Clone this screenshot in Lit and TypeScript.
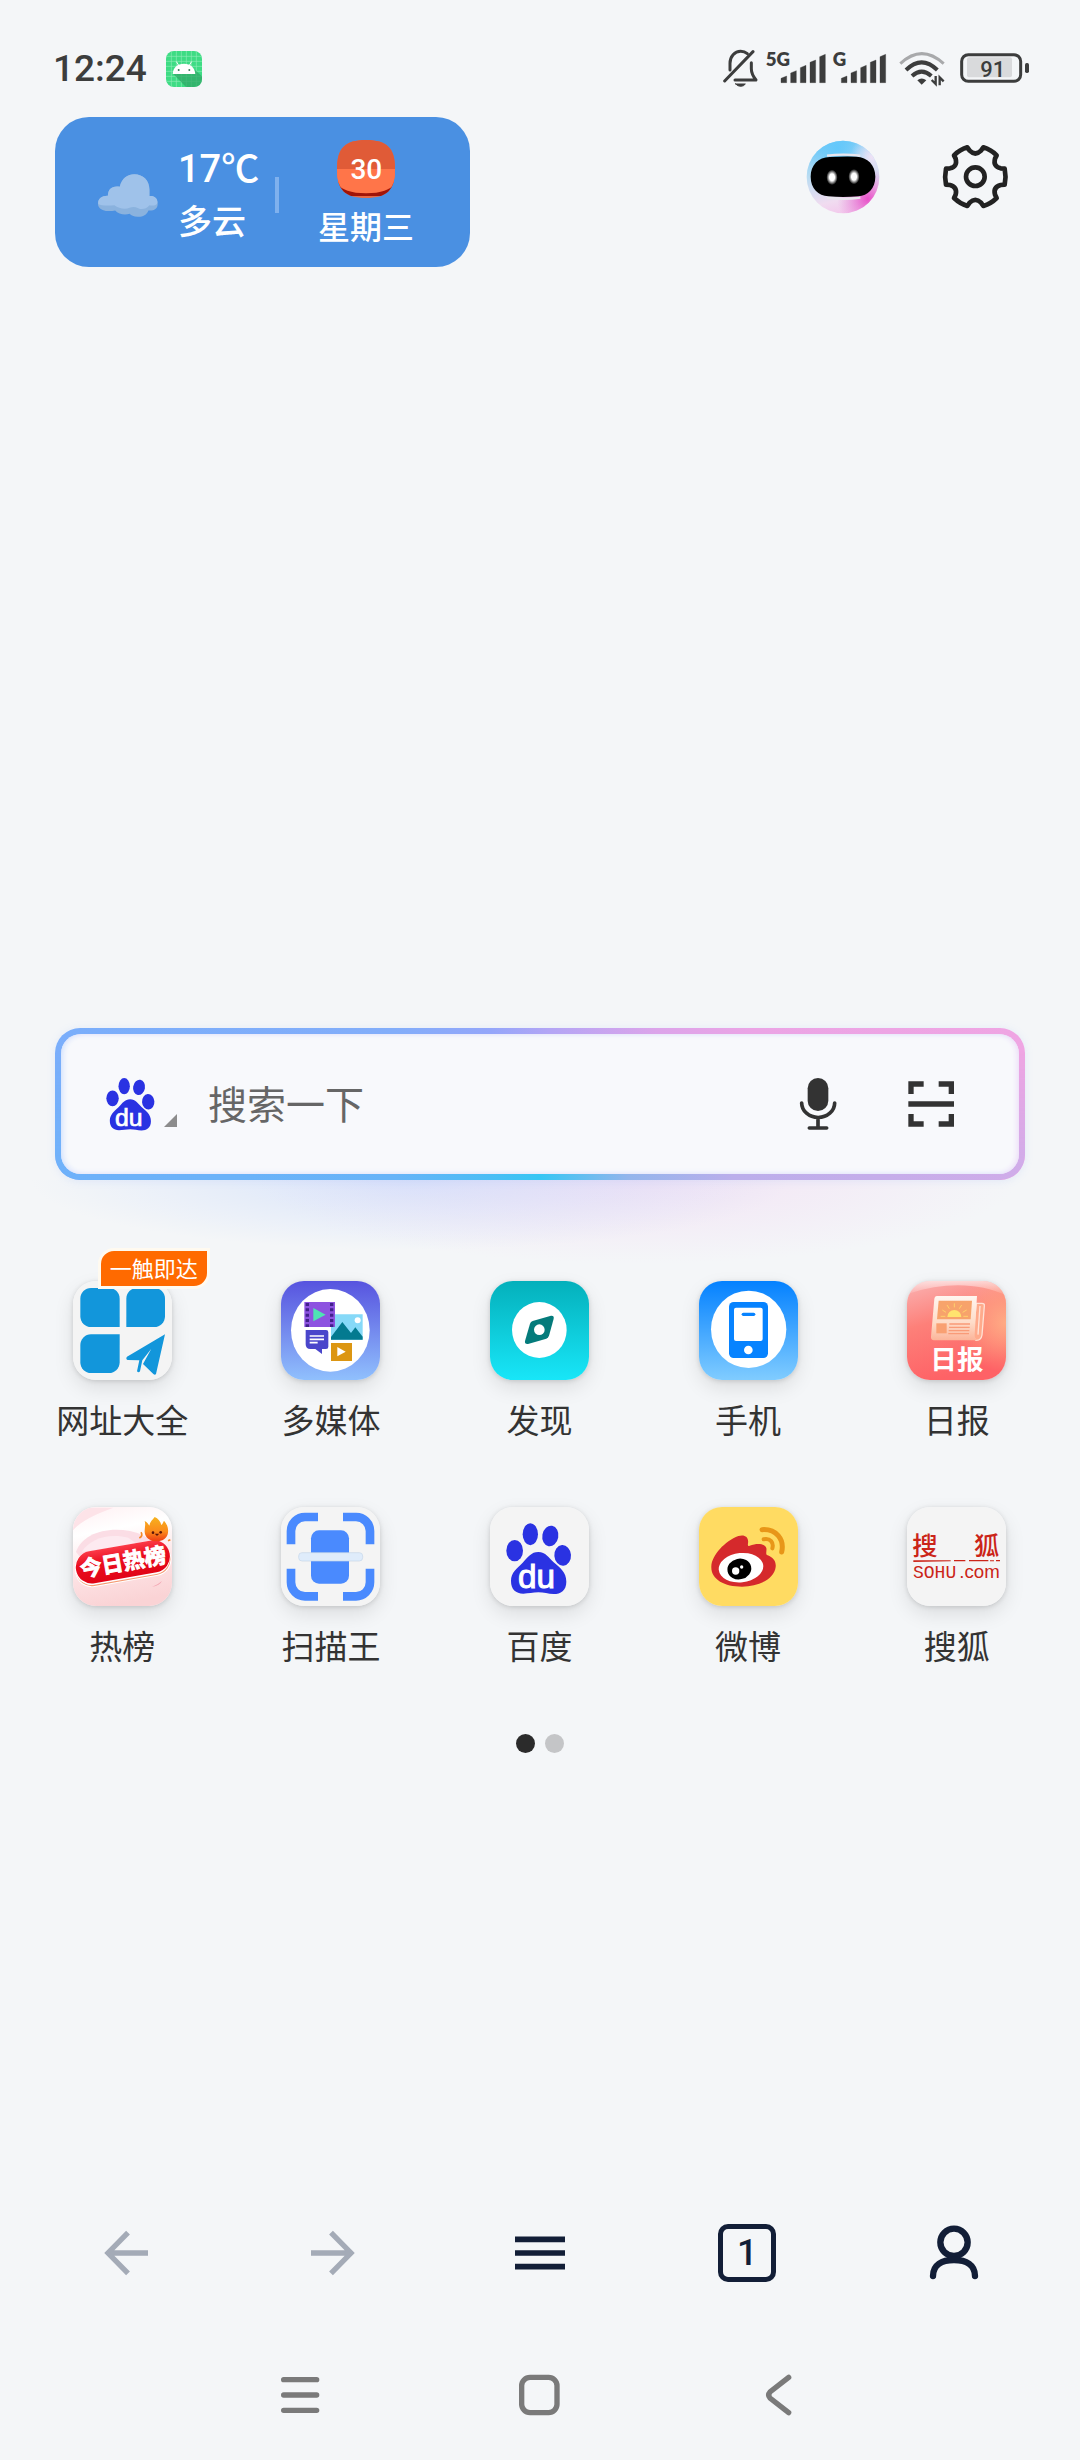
import { LitElement, html, svg, css, nothing, type SVGTemplateResult } from "lit";
import { customElement, property } from "lit/decorators.js";

interface Shortcut {
  label: string;
  viewBox: string;
  art: SVGTemplateResult;
  badge?: string;
}

/** Baidu paw, drawn in the same units as the app tiles. */
const paw = svg`
  <g fill="#2a32e2">
    <ellipse cx="164" cy="211" rx="25" ry="32"></ellipse>
    <ellipse cx="211" cy="162" rx="23" ry="33"></ellipse>
    <ellipse cx="271" cy="167" rx="24" ry="31" transform="rotate(10 271 167)"></ellipse>
    <ellipse cx="308" cy="225" rx="25" ry="31" transform="rotate(-4 308 225)"></ellipse>
    <path d="M235 215C257 215 266 232 281 246C300 263 319 275 319 304C319 331 302 341 281 341C264 341 252 336 235 336C218 336 206 340 190 340C167 340 153 327 153 302C153 276 170 265 188 247C205 230 213 215 235 215Z"></path>
  </g>
  <text x="174" y="322" font-family="'Liberation Sans', sans-serif" font-size="100" fill="#fff" stroke="#fff" stroke-width="3">du</text>`;

/** Six-toothed cog outline around the given centre. */
function cogPath(cx: number, cy: number): string {
  const at = (deg: number, r: number) => {
    const a = (deg * Math.PI) / 180;
    return `${Math.round(cx + r * Math.cos(a))} ${Math.round(cy + r * Math.sin(a))}`;
  };
  let d = "";
  for (let k = 0; k < 6; k++) {
    const t = k * 60;
    d += `${k ? "L" : "M"}${at(t - 15, 91)}Q${at(t, 93)} ${at(t + 15, 91)}`;
    d += `L${at(t + 18, 80)}Q${at(t + 30, 61)} ${at(t + 42, 80)}`;
  }
  return d + "Z";
}

const shortcuts: Shortcut[] = [
  {
    label: "网址大全",
    badge: "一触即达",
    viewBox: "99 123 297 297",
    art: svg`
      <rect x="99" y="123" width="297" height="297" fill="#f4f4f4"></rect>
      <g fill="#1296db">
        <path d="M153 144h54a32 32 0 0 1 32 32v85h-86a32 32 0 0 1-32-32v-53a32 32 0 0 1 32-32z"></path>
        <path d="M291 144h52a32 32 0 0 1 32 32v53a32 32 0 0 1-32 32h-84v-85a32 32 0 0 1 32-32z"></path>
        <path d="M153 283h86v84a32 32 0 0 1-32 32h-54a32 32 0 0 1-32-32v-52a32 32 0 0 1 32-32z"></path>
        <path d="M375 283L348 402Q345 407 340 402L309 372L334 326L307 361L300 394Q296 400 291 394L298 361L263 360Q256 356 261 350Z"></path>
      </g>`,
  },
  {
    label: "多媒体",
    viewBox: "726 123 297 297",
    art: svg`
      <defs><linearGradient id="media" x2="0" y2="1"><stop stop-color="#5753df"></stop><stop offset="1" stop-color="#90c0fd"></stop></linearGradient></defs>
      <rect x="726" y="123" width="297" height="297" fill="url(#media)"></rect>
      <ellipse cx="874" cy="271" rx="118" ry="124" fill="#fff"></ellipse>
      <rect x="796" y="186" width="92" height="75" fill="#8d53e0"></rect>
      <g stroke="#42208c" stroke-width="10" stroke-dasharray="9 7"><path d="M805 189V261M878 189V261"></path></g>
      <path d="M823 204L860 224L823 244Z" fill="#4fe3b4"></path>
      <path d="M888 223H971V299H876V261H888Z" fill="#86d9f8"></path>
      <path d="M876 299V291L910 246L936 279L949 262L971 290V299Z" fill="#047a90"></path>
      <circle cx="956" cy="241" r="9" fill="#fff"></circle>
      <path d="M800 270H861Q868 270 868 277V320Q868 327 861 327H849V342L829 327H814Q800 327 800 313Z" fill="#4a46cb"></path>
      <path d="M812 288H855M812 298H855M812 308H836" stroke="#fff" stroke-width="5"></path>
      <rect x="876" y="309" width="63" height="54" fill="#dc9612"></rect>
      <path d="M895 321L920 335L895 349Z" fill="#fff"></path>`,
  },
  {
    label: "发现",
    viewBox: "270 123 297 297",
    art: svg`
      <defs><linearGradient id="discover" x2="0" y2="1"><stop stop-color="#04b0bb"></stop><stop offset="1" stop-color="#18e6f8"></stop></linearGradient></defs>
      <rect x="270" y="123" width="297" height="297" fill="url(#discover)"></rect>
      <ellipse cx="418" cy="270" rx="82" ry="84" fill="#fff"></ellipse>
      <path d="M398 243L453 227Q463 226 461 236L447 287Q445 293 439 296L384 312Q373 313 375 303L390 251Q392 245 398 243Z" fill="#047b7b"></path>
      <circle cx="418" cy="269" r="16" fill="#fff"></circle>`,
  },
  {
    label: "手机",
    viewBox: "54 123 297 297",
    art: svg`
      <defs><linearGradient id="phone" x2="0" y2="1"><stop stop-color="#0481ff"></stop><stop offset="1" stop-color="#80ccff"></stop></linearGradient></defs>
      <rect x="54" y="123" width="297" height="297" fill="url(#phone)"></rect>
      <ellipse cx="203" cy="268" rx="113" ry="116" fill="#fff"></ellipse>
      <rect x="144" y="186" width="117" height="168" rx="14" fill="#0783ff"></rect>
      <rect x="159" y="203" width="86" height="100" rx="6" fill="#fff"></rect>
      <rect x="182" y="218" width="41" height="10" rx="5" fill="#0783ff"></rect>
      <circle cx="202" cy="330" r="13" fill="#fff"></circle>`,
  },
  {
    label: "日报",
    viewBox: "681 123 297 297",
    art: svg`
      <defs>
        <linearGradient id="daily" x2="0.3" y2="1"><stop stop-color="#fab4b4"></stop><stop offset="0.45" stop-color="#fd8079"></stop><stop offset="1" stop-color="#fe6266"></stop></linearGradient>
        <radialGradient id="dailyWarm" cx="1" cy="0.42" r="0.5"><stop stop-color="#ffab84"></stop><stop offset="1" stop-color="#ffab84" stop-opacity="0"></stop></radialGradient>
        <linearGradient id="dailyPaper" x2="0" y2="1"><stop stop-color="#fff6f0"></stop><stop offset="0.6" stop-color="#fedcc8"></stop><stop offset="1" stop-color="#fcb499"></stop></linearGradient>
        <linearGradient id="dailyShine" x2="0" y2="1"><stop stop-color="#fff" stop-opacity="0.6"></stop><stop offset="1" stop-color="#fff" stop-opacity="0.05"></stop></linearGradient>
      </defs>
      <rect x="681" y="123" width="297" height="297" fill="url(#daily)"></rect>
      <rect x="681" y="123" width="297" height="297" fill="url(#dailyWarm)"></rect>
      <path d="M681 123H978V166C900 128 790 126 690 160Z" fill="url(#dailyShine)"></path>
      <path d="M889 190H906Q914 190 913 198L906 285Q903 302 888 301L878 290Z" fill="#ffab8c" stroke="#ffe2d6" stroke-width="4"></path>
      <path d="M900 198L894 284" stroke="#ffe2d6" stroke-width="4"></path>
      <path d="M770 168H891L884 285Q884 300 894 301H762Q752 300 753 290L763 176Q764 168 770 168Z" fill="url(#dailyPaper)"></path>
      <path d="M776 182H876L872 238H771Z" fill="#f7a36b"></path>
      <path d="M802 231A21 21 0 0 1 844 231Z" fill="#ffe36e"></path>
      <g stroke="#ffd16c" stroke-width="3"><path d="M823 202V190M808 206L801 195M838 206L845 195M798 217L787 210M848 217L860 210M796 229H782M850 229H864"></path></g>
      <rect x="769" y="250" width="31" height="30" fill="#f9a072"></rect>
      <path d="M808 252H870M807 262H869M806 272H868M805 281H867" stroke="#f99b78" stroke-width="4"></path>
      <text x="751" y="386" font-size="80" font-weight="700" fill="#fff">日报</text>`,
  },
  {
    label: "热榜",
    viewBox: "99 80 297 297",
    art: svg`
      <defs>
        <linearGradient id="hot" x1="0.2" y1="0" x2="0.4" y2="1"><stop stop-color="#fff2f4"></stop><stop offset="0.25" stop-color="#fff"></stop><stop offset="0.7" stop-color="#fde0e2"></stop><stop offset="1" stop-color="#fad3d5"></stop></linearGradient>
        <linearGradient id="hotPill" x2="0" y2="1"><stop stop-color="#fb3a48"></stop><stop offset="0.4" stop-color="#ea0e1f"></stop><stop offset="1" stop-color="#e10416"></stop></linearGradient>
        <linearGradient id="flame" x2="0" y2="1"><stop stop-color="#f6b21e"></stop><stop offset="0.6" stop-color="#fb8a1c"></stop><stop offset="1" stop-color="#ee3a14"></stop></linearGradient>
      </defs>
      <rect x="99" y="80" width="297" height="297" fill="url(#hot)"></rect>
      <path d="M99 82H220C170 100 125 120 99 150Z" fill="#fde3e8"></path>
      <path d="M108 215C125 165 190 138 270 152C300 158 330 175 345 190L120 230Z" fill="#fbdde5"></path>
      <path d="M125 215C150 175 205 158 265 172L290 190Z" fill="#fdeaf0"></path>
      <path d="M336 320Q355 312 366 302Q360 315 336 320Z" fill="#f3a8b4"></path>
      <g transform="rotate(-10 248 250)">
        <rect x="103" y="204" width="292" height="100" rx="50" fill="#fff"></rect>
        <rect x="106" y="206" width="286" height="95" rx="47" fill="#f59a72"></rect>
        <rect x="104" y="196" width="288" height="102" rx="50" fill="#fff"></rect>
        <rect x="107" y="196" width="285" height="97" rx="48" fill="url(#hotPill)"></rect>
        <text x="120" y="269" font-size="65" font-weight="700" fill="#fff" stroke="#fff" stroke-width="3">今日热榜</text>
      </g>
      <path d="M314 122C322 126 325 132 328 136C330 124 338 118 344 110C354 114 362 124 364 134C368 132 370 124 372 121C380 130 386 142 384 157C382 174 366 183 349 183C330 183 315 172 314 155C313 144 318 134 314 122Z" fill="url(#flame)"></path>
      <g fill="#5d1608"><circle cx="339" cy="157" r="4"></circle><circle cx="362" cy="156" r="4"></circle><path d="M345 160H357Q351 172 345 160Z"></path></g>
      <path d="M303 156Q310 166 298 173M384 181L391 178" stroke="#f48a2a" stroke-width="5" fill="none"></path>`,
  },
  {
    label: "扫描王",
    viewBox: "726 80 297 297",
    art: svg`
      <rect x="726" y="80" width="297" height="297" fill="#f4f4f4"></rect>
      <g fill="none" stroke="#4a8afe" stroke-width="26">
        <path d="M837 110H798A42 42 0 0 0 756 152V192"></path>
        <path d="M912 110H951A42 42 0 0 1 993 152V192"></path>
        <path d="M756 265V306A42 42 0 0 0 798 348H837"></path>
        <path d="M993 265V306A42 42 0 0 1 951 348H912"></path>
      </g>
      <rect x="816" y="150" width="114" height="160" rx="24" fill="#4a8afe"></rect>
      <rect x="779" y="217" width="192" height="25" rx="10" fill="#dfecfb" stroke="#c6d6e8" stroke-width="2"></rect>`,
  },
  {
    label: "百度",
    viewBox: "90 80 297 297",
    art: svg`<rect x="90" y="80" width="297" height="297" fill="#f4f4f4"></rect>${paw}`,
  },
  {
    label: "微博",
    viewBox: "714 80 297 297",
    art: svg`
      <rect x="714" y="80" width="297" height="297" fill="#ffdb62"></rect>
      <path d="M751 258C752 225 792 182 832 167C851 161 864 170 861 189C860 197 861 198 866 196C888 188 911 189 916 203C918 213 912 221 920 225C936 231 946 243 944 260C940 296 895 318 843 319C790 319 749 297 751 258Z" fill="#d5292c"></path>
      <ellipse cx="840" cy="262" rx="67" ry="44" fill="#fff" transform="rotate(-6 840 262)"></ellipse>
      <ellipse cx="835" cy="266" rx="36" ry="31" fill="#000" transform="rotate(-12 835 266)"></ellipse>
      <circle cx="824" cy="272" r="11" fill="#fff"></circle>
      <circle cx="842" cy="260" r="5" fill="#fff"></circle>
      <g fill="none" stroke="#e89618" stroke-linecap="round">
        <path d="M903 148C945 145 971 177 962 215" stroke-width="15"></path>
        <path d="M908 177C928 173 939 187 934 204" stroke-width="12"></path>
      </g>`,
  },
  {
    label: "搜狐",
    viewBox: "681 80 297 297",
    art: svg`
      <rect x="681" y="80" width="297" height="297" fill="#f4f4f4"></rect>
      <g fill="#cb2418">
        <g font-size="76" font-weight="500"><text x="697" y="224">搜</text><text x="882" y="224">狐</text></g>
        <path d="M700 240L812 240V243L700 245ZM822 239H856V243H822ZM867 239H925V243H867ZM930 240H942V243H930ZM948 239H960V243H948Z"></path>
        <text x="699" y="294" font-family="'Liberation Mono', monospace" font-size="54">SOHU</text>
        <text x="838" y="294" font-family="'Liberation Sans', sans-serif" font-size="56">.com</text>
      </g>`,
  },
];

@customElement("status-bar")
class StatusBar extends LitElement {
  static styles = css`
    :host {
      display: flex;
      align-items: center;
      justify-content: space-between;
      padding: 34px 51px 0 53px;
      height: 70px;
      color: #3c3d3d;
    }
    .group {
      display: flex;
      align-items: center;
    }
    .left { gap: 19px; }
    .right { gap: 6px; }
    .time {
      font-family: Roboto, sans-serif;
      font-size: 37px;
      line-height: 44px;
      font-weight: 500;
    }
    svg { display: block; height: 42px; }
    .android { width: 36px; height: 36px; }
    .bell { width: 36px; }
    .signal { width: 61px; }
    .wifi { width: 55px; }
    .battery { width: 69px; }
  `;

  private signal(name: string, offset: number) {
    const bars = [84, 68, 52, 36, 19];
    return html`<svg class="signal" viewBox="0 0 183 126" fill="currentColor">
      <text x="2" y="54" font-size="56" font-weight="800">${name}</text>
      ${bars.map((top, i) => {
        const x = offset + i * 29;
        return svg`<path d="M${x} ${top + 7}L${x + 17} ${top}V104H${x}Z" stroke="currentColor" stroke-width="1"></path>`;
      })}
    </svg>`;
  }

  render() {
    return html`
      <div class="group left">
        <span class="time">12:24</span>
        <svg class="android" viewBox="0 0 108 108">
          <rect width="108" height="108" rx="24" fill="#3ddc84"></rect>
          <path d="M16 0V108M31 0V108M46 0V108M61 0V108M76 0V108M91 0V108M0 16H108M0 31H108M0 46H108M0 61H108M0 76H108M0 91H108" stroke="#8cebb6" stroke-width="2"></path>
          <path d="M22 69L60 108H84Q108 106 108 84V76L88 58Z" fill="#2fa866" opacity="0.75"></path>
          <path d="M20 69C21 50 34 38 54 38S86 50 88 69Z" fill="#fff"></path>
          <path d="M38 43L32 33M70 43L76 33" stroke="#fff" stroke-width="3" stroke-linecap="round"></path>
          <circle cx="38" cy="57" r="3" fill="#3a7a58"></circle>
          <circle cx="70" cy="57" r="3" fill="#3a7a58"></circle>
        </svg>
      </div>
      <div class="group right">
        <svg class="bell" viewBox="0 0 108 126" fill="none" stroke="currentColor" stroke-width="9" stroke-linecap="round" stroke-linejoin="round">
          <path d="M90 11L5 99"></path>
          <path d="M21 66V46C21 25 35 10 53 10C61 10 67 12 73 17"></path>
          <path d="M85 44V62C85 78 92 87 99 96H36"></path>
          <path d="M38 108H67Q62 115 53 115T38 108Z" fill="currentColor" stroke-width="3"></path>
        </svg>
        ${this.signal("5G", 48)} ${this.signal("G", 28)}
        <svg class="wifi" viewBox="0 0 165 126" fill="none" stroke="currentColor">
          <path d="M4 47Q68 -13 134 47" stroke="#a8a9ab" stroke-width="9"></path>
          <path d="M21 66Q68 20 115 66" stroke-width="12"></path>
          <path d="M39 84Q68 58 97 84" stroke-width="12"></path>
          <path d="M55 97Q68 86 82 97L68 110Z" fill="currentColor" stroke="none"></path>
          <path d="M110 84V108L98 96M122 112V88L134 100" stroke-width="7"></path>
        </svg>
        <svg class="battery" viewBox="0 0 207 126">
          <rect x="5" y="20" width="177" height="80" rx="20" fill="none" stroke="currentColor" stroke-width="9"></rect>
          <rect x="21" y="28" width="135" height="60" rx="6" fill="#d9dadc"></rect>
          <text x="98" y="86" text-anchor="middle" font-family="Roboto, sans-serif" font-size="66" font-weight="500" fill="currentColor">91</text>
          <rect x="195" y="45" width="12" height="30" rx="5" fill="currentColor"></rect>
        </svg>
      </div>
    `;
  }
}

@customElement("weather-card")
class WeatherCard extends LitElement {
  static styles = css`
    :host {
      display: flex;
      align-items: center;
      gap: 20px;
      box-sizing: border-box;
      min-height: 150px;
      padding: 6px 56px 0 43px;
      border-radius: 34px;
      background: #4a90e2;
      color: #fff;
      font-weight: 500;
    }
    svg { display: block; }
    .cloud { width: 60px; height: 43px; }
    .now { width: 77px; white-space: nowrap; }
    .temp {
      font-family: Roboto, "Noto Sans CJK SC", sans-serif;
      font-size: 38px;
      line-height: 51px;
    }
    .sky { font-size: 34px; line-height: 51px; }
    .rule {
      width: 4px;
      height: 36px;
      background: #7fb1ee;
    }
    .date {
      display: flex;
      flex-direction: column;
      align-items: center;
      gap: 6px;
      margin-left: 19px;
    }
    .calendar { width: 58px; height: 58px; }
    .weekday { font-size: 32px; line-height: 46px; }
  `;

  render() {
    return html`
      <svg class="cloud" viewBox="0 0 182 129">
        <path d="M66 38C72 12 90 0 110 0C138 0 157 20 156 50V66C172 64 182 76 181 92C180 106 168 112 153 110C148 124 134 130 120 129C108 129 101 125 96 120C82 124 62 122 52 110C32 114 8 112 1 96C-4 80 8 64 30 65C30 46 42 34 66 38Z" fill="#8ab2de"></path>
        <path d="M66 38C72 12 90 0 110 0C138 0 157 20 156 50V66C172 64 182 74 180 87C178 94 168 96 156 94C146 106 132 108 122 103C112 98 104 98 96 102C82 108 62 104 50 94C34 96 8 96 1 90C-2 76 10 64 30 65C30 46 42 34 66 38Z" fill="#9fc2ea"></path>
      </svg>
      <div class="now">
        <div class="temp">17℃</div>
        <div class="sky">多云</div>
      </div>
      <div class="rule"></div>
      <div class="date">
        <svg class="calendar" viewBox="0 0 174 174">
          <defs><clipPath id="page"><path d="M87 0C150 0 174 24 174 87S150 174 87 174S0 150 0 87S24 0 87 0Z"></path></clipPath></defs>
          <g clip-path="url(#page)">
            <rect width="174" height="174" fill="#e66a48"></rect>
            <rect y="120" width="174" height="48" fill="#a01408"></rect>
            <path d="M0 130Q20 160 87 160T174 130V100H0Z" fill="#ff7549"></path>
            <rect width="174" height="87" fill="#e05b37"></rect>
            <rect y="87" width="174" height="42" fill="#ff7549"></rect>
          </g>
          <text x="88" y="117" text-anchor="middle" font-family="Roboto, sans-serif" font-size="84" font-weight="500" fill="#fff">30</text>
        </svg>
        <div class="weekday">星期三</div>
      </div>
    `;
  }
}

@customElement("search-box")
class SearchBox extends LitElement {
  static styles = css`
    :host {
      display: block;
      position: relative;
      margin: 0 55px;
      padding: 6px;
      border-radius: 25px;
      background: linear-gradient(90deg, #7aaefb, #82adfa 35%, #94a6fa 45%, #b3a5f5 51%, #dca4ea 62%, #eba4e5 72%, #efa5e3);
      box-shadow: 0 1px 8px rgba(120, 160, 250, 0.15);
    }
    :host::before {
      content: "";
      position: absolute;
      inset: 0;
      border-radius: inherit;
      background: linear-gradient(90deg, #6fb1fa, #67b3f8 35%, #4bbdf5 45%, #36c6f4 50%, #93b5ec 59%, #bbaeeb 70%, #d0ace9);
      mask-image: linear-gradient(transparent 15%, #000 90%);
      -webkit-mask-image: linear-gradient(transparent 15%, #000 90%);
    }
    .field {
      position: relative;
      display: flex;
      align-items: center;
      height: 140px;
      padding: 0 62px 0 45px;
      border-radius: 20px;
      background: #f8f9fc;
      box-shadow: inset 4px 0 8px -5px #bcd8fd, inset -4px 0 8px -5px #efd0f3, inset 0 0 6px #e6e8fc;
    }
    button {
      display: flex;
      align-items: flex-end;
      padding: 0;
      border: 0;
      background: none;
    }
    svg { display: block; }
    .engine { gap: 9px; }
    .paw { width: 49px; height: 53px; }
    .more { width: 13px; height: 17px; }
    .tool { width: 52px; height: 52px; }
    .voice { margin-right: 61px; }
    input {
      flex: 1;
      min-width: 0;
      margin: 0 31px;
      padding: 0;
      border: 0;
      outline: 0;
      background: none;
      color: #333;
      font: inherit;
      font-size: 39px;
      line-height: 56px;
    }
    input::placeholder { color: #666; opacity: 1; }
  `;

  render() {
    return html`
      <div class="field">
        <button class="engine" aria-label="百度">
          <svg class="paw" viewBox="138 129 197 214">${paw}</svg>
          <svg class="more" viewBox="0 0 13 17"><path d="M13 0V13H0Z" fill="#8c8c8c"></path></svg>
        </button>
        <input type="search" aria-label="搜索一下" placeholder="搜索一下" />
        <button class="voice" aria-label="语音搜索">
          <svg class="tool" viewBox="756 201 156 156" fill="none" stroke="#333" stroke-width="11" stroke-linecap="round">
            <rect x="803" y="201" width="62" height="99" rx="31" fill="#333" stroke="none"></rect>
            <path d="M785 276A49 43 0 0 0 884 276M834 322V350M808 351H860"></path>
          </svg>
        </button>
        <button aria-label="扫一扫">
          <svg class="tool" viewBox="1095 204 156 156" fill="none" stroke="#333" stroke-width="16">
            <path d="M1151 222H1113V252M1196 222H1234V252M1113 312V342H1151M1234 312V342H1196M1105 282H1242"></path>
          </svg>
        </button>
      </div>
    `;
  }
}

@customElement("shortcut-tile")
class ShortcutTile extends LitElement {
  @property({ attribute: false }) item!: Shortcut;

  static styles = css`
    a {
      display: flex;
      flex-direction: column;
      align-items: center;
      gap: 16px;
      color: #333;
      text-decoration: none;
    }
    .icon { position: relative; }
    svg {
      display: block;
      width: 99px;
      height: 99px;
      border-radius: 23px;
      box-shadow: 0 8px 20px rgba(0, 0, 0, 0.1), 0 1px 5px rgba(0, 0, 0, 0.14);
    }
    .badge {
      position: absolute;
      top: -33px;
      left: 25px;
      padding: 0 9px;
      border: 3px solid #fffaf0;
      border-radius: 16px 0 16px 0;
      background: #ff6a00;
      color: #fff;
      font-size: 22px;
      line-height: 35px;
      white-space: nowrap;
    }
    .label {
      font-size: 33px;
      line-height: 48px;
      white-space: nowrap;
    }
  `;

  render() {
    const { label, viewBox, art, badge } = this.item;
    return html`<a href="#">
      <span class="icon">
        <svg viewBox=${viewBox} aria-hidden="true">${art}</svg>
        ${badge ? html`<span class="badge">${badge}</span>` : nothing}
      </span>
      <span class="label">${label}</span>
    </a>`;
  }
}

@customElement("app-root")
class AppRoot extends LitElement {
  static styles = css`
    :host {
      display: flex;
      flex-direction: column;
      min-height: 100vh;
      background: #f4f6f8;
      font-family: Lato, "Noto Sans CJK SC", sans-serif;
    }
    svg { display: block; }
    button {
      display: grid;
      place-items: center;
      padding: 0;
      border: 0;
      background: none;
      color: inherit;
      font: inherit;
    }
    .top {
      display: flex;
      align-items: flex-start;
      justify-content: space-between;
      padding: 13px 64px 0 55px;
    }
    .actions {
      display: flex;
      gap: 53px;
      padding-top: 20px;
    }
    .actions svg { width: 80px; height: 80px; }
    .space-above { flex: 9; }
    .space-below { flex: 5; }
    .shortcuts {
      display: grid;
      grid-template-columns: repeat(5, 1fr);
      row-gap: 63px;
      padding: 101px 19px 0 18px;
      background:
        radial-gradient(380px 70px at 38% 0, rgba(176, 202, 255, 0.4), rgba(176, 202, 255, 0)) no-repeat,
        radial-gradient(380px 84px at 59% 0, rgba(240, 200, 240, 0.4), rgba(240, 200, 240, 0)) no-repeat;
    }
    .pages {
      display: flex;
      justify-content: center;
      gap: 10px;
      padding-top: 64px;
    }
    .dot {
      width: 19px;
      height: 19px;
      border-radius: 50%;
      background: #c4c5c7;
    }
    .dot.current { background: #2b2b2b; }
    .toolbar, .system {
      display: grid;
      align-items: center;
      justify-items: center;
    }
    .toolbar {
      grid-template-columns: repeat(5, 1fr);
      height: 154px;
      padding: 0 22px;
      color: #121e37;
    }
    .system {
      grid-template-columns: repeat(3, 1fr);
      height: 130px;
      padding: 0 180px;
      color: #7a7a7a;
    }
    .toolbar svg, .system svg {
      width: 60px;
      height: 60px;
      fill: none;
      stroke: currentColor;
    }
    .toolbar button:disabled { color: #a4abb7; }
    .toolbar .tabs {
      box-sizing: border-box;
      width: 58px;
      height: 58px;
      border: 5px solid currentColor;
      border-radius: 10px;
      font-family: Roboto, sans-serif;
      font-size: 36px;
      line-height: 48px;
      font-weight: 500;
    }
  `;

  render() {
    return html`
      <status-bar></status-bar>
      <header class="top">
        <weather-card></weather-card>
        <div class="actions">
          <button aria-label="智能助手">
            <svg viewBox="0 0 240 240">
              <defs>
                <linearGradient id="shell" x1="0.3" y1="0" x2="0.55" y2="1"><stop stop-color="#6ec8f8"></stop><stop offset="0.4" stop-color="#b9dcf2"></stop><stop offset="0.8" stop-color="#f0dcf0"></stop><stop offset="1" stop-color="#f3c8ec"></stop></linearGradient>
                <radialGradient id="shellTop" cx="0.42" cy="0.1" r="0.45"><stop stop-color="#63c8fb"></stop><stop offset="1" stop-color="#63c8fb" stop-opacity="0"></stop></radialGradient>
                <radialGradient id="shellPink" cx="0.84" cy="0.8" r="0.42"><stop stop-color="#e84fc8"></stop><stop offset="1" stop-color="#e27fd8" stop-opacity="0"></stop></radialGradient>
                <radialGradient id="shellRight" cx="0.9" cy="0.22" r="0.3"><stop stop-color="#efe2f6"></stop><stop offset="1" stop-color="#efe2f6" stop-opacity="0"></stop></radialGradient>
                <radialGradient id="eye"><stop offset="0.45" stop-color="#fff"></stop><stop offset="1" stop-color="#fff" stop-opacity="0"></stop></radialGradient>
              </defs>
              <circle cx="120" cy="120" r="109" fill="url(#shell)"></circle>
              <circle cx="120" cy="120" r="109" fill="url(#shellTop)"></circle>
              <circle cx="120" cy="120" r="109" fill="url(#shellRight)"></circle>
              <circle cx="120" cy="120" r="109" fill="url(#shellPink)"></circle>
              <path d="M72 56Q120 50 172 56M72 182Q120 189 172 182" stroke="#e9e6ee" stroke-width="7" fill="none"></path>
              <path d="M23 119C23 84 46 61 80 60Q120 58 160 59C194 60 217 84 217 119S194 176 166 178Q120 182 76 178C46 176 23 154 23 119Z" fill="#000"></path>
              <ellipse cx="87" cy="121" rx="17" ry="23" fill="url(#eye)"></ellipse>
              <ellipse cx="153" cy="119" rx="17" ry="23" fill="url(#eye)"></ellipse>
            </svg>
          </button>
          <button aria-label="设置">
            <svg viewBox="0 0 240 240" fill="none" stroke="#222" stroke-width="14" stroke-linejoin="round">
              <path d=${cogPath(118, 119)}></path>
              <circle cx="118" cy="119" r="28"></circle>
            </svg>
          </button>
        </div>
      </header>
      <div class="space-above"></div>
      <search-box></search-box>
      <nav class="shortcuts">
        ${shortcuts.map((item) => html`<shortcut-tile .item=${item}></shortcut-tile>`)}
      </nav>
      <div class="pages">
        <span class="dot current"></span>
        <span class="dot"></span>
      </div>
      <div class="space-below"></div>
      <nav class="toolbar">
        <button disabled aria-label="后退">
          <svg viewBox="0 0 180 180" stroke-width="16"><path d="M96 29L36 90L96 151M36 90H156"></path></svg>
        </button>
        <button disabled aria-label="前进">
          <svg viewBox="0 0 180 180" stroke-width="16"><path d="M84 29L144 90L84 151M144 90H24"></path></svg>
        </button>
        <button aria-label="菜单">
          <svg viewBox="0 0 180 180" stroke-width="17"><path d="M15 49H165M15 90H165M15 131H165"></path></svg>
        </button>
        <button class="tabs" aria-label="标签页 1">1</button>
        <button aria-label="我的">
          <svg viewBox="0 0 180 180" stroke-width="19" stroke-linecap="round">
            <circle cx="90" cy="58" r="41"></circle>
            <path d="M27 159C27 126 53 111 90 111S153 126 153 159"></path>
          </svg>
        </button>
      </nav>
      <nav class="system">
        <button aria-label="最近任务">
          <svg viewBox="0 0 180 180" stroke-width="16" stroke-linecap="round"><path d="M41 44H140M41 90H140M41 136H140"></path></svg>
        </button>
        <button aria-label="主屏幕">
          <svg viewBox="0 0 180 180" stroke-width="16"><rect x="35" y="37" width="106" height="106" rx="25"></rect></svg>
        </button>
        <button aria-label="返回">
          <svg viewBox="0 0 180 180" stroke-width="16" stroke-linecap="round"><path d="M116 37L60 81Q52 90 60 99L116 143"></path></svg>
        </button>
      </nav>
    `;
  }
}
